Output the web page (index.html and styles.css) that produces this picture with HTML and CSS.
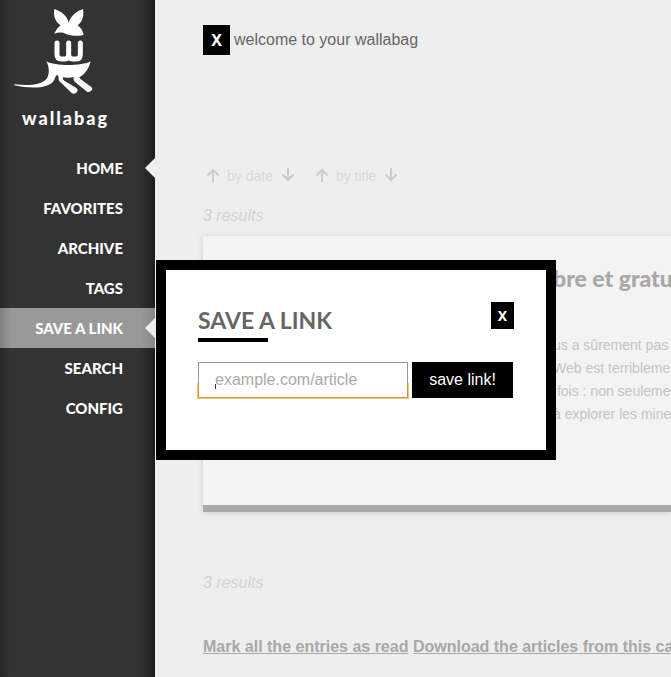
FILE: index.html
```html
<!DOCTYPE html>
<html lang="en">
<head>
<meta charset="utf-8">
<title>wallabag</title>
<link rel="stylesheet" href="styles.css">
</head>
<body>
<div class="layout">
  <header class="sidebar">
    <a class="brand" href="#">
      <svg class="brand-mark" viewBox="39 24 240 261" aria-hidden="true">
        <path fill="#fff" d="M163 27C184 34 202 48 206 68C212 48 230 33 249 27C253 50 246 66 233 76C243 83 248 92 251 104C235 110 212 108 198 102C186 96 174 97 163 101C167 91 174 82 182 76C167 66 159 50 163 27Z"/>
        <path fill="none" stroke="#fff" stroke-width="15" stroke-linecap="round" d="M171 129V163Q171 177 184 177H194Q206 177 206 163V129M206 163Q206 177 218 177H229Q241 177 241 163V129"/>
        <path fill="#fff" d="M139 184C165 199 245 199 272 184C266 208 254 224 238 232L241 237L273 260Q280 265 275 271Q268 279 261 275L228 248Q217 241 222 231C214 233 200 234 189 232Q187 238 194 243L228 263Q236 269 231 276Q223 285 214 278L181 246Q174 242 176 232Q172 218 166 231C160 262 110 270 43 256L43 253C90 258 125 254 140 236C150 222 147 198 139 184Z"/>
      </svg>
      <span class="brand-name">wallabag</span>
    </a>
    <nav>
      <ul class="menu">
        <li><a class="pointer" href="#">Home</a></li>
        <li><a href="#">Favorites</a></li>
        <li><a href="#">Archive</a></li>
        <li><a href="#">Tags</a></li>
        <li><a class="pointer active" href="#">Save a link</a></li>
        <li><a href="#">Search</a></li>
        <li><a href="#">Config</a></li>
      </ul>
    </nav>
  </header>
  <main class="content">
    <div class="message"><button class="close" type="button">X</button><p>welcome to your wallabag</p></div>
    <div class="sort">
      <a href="#" aria-label="date ascending"><svg viewBox="0 0 14 16"><path d="M7 14V2M1.500 7.500L7 2L12.500 7.500"/></svg></a>
      <span>by date</span>
      <a href="#" aria-label="date descending"><svg viewBox="0 0 14 16"><path d="M7 0V12M1.500 6.500L7 12L12.500 6.500"/></svg></a>
      <a class="next" href="#" aria-label="title ascending"><svg viewBox="0 0 14 16"><path d="M7 14V2M1.500 7.500L7 2L12.500 7.500"/></svg></a>
      <span>by title</span>
      <a href="#" aria-label="title descending"><svg viewBox="0 0 14 16"><path d="M7 0V12M1.500 6.500L7 12L12.500 6.500"/></svg></a>
    </div>
    <p class="results">3 results</p>
    <article class="entry">
      <h2>bre et gratuit</h2>
      <p>us a sûrement pas<br>Web est terriblement<br>&nbsp;fois : non seulement<br>à explorer les mines</p>
    </article>
    <p class="results">3 results</p>
    <p class="actions"><a href="#">Mark all the entries as read</a> <a href="#">Download the articles from this category</a></p>
  </main>
</div>
<section class="dialog" role="dialog" aria-labelledby="dialog-title">
  <div class="dialog-head">
    <h2 id="dialog-title">Save a link</h2>
    <button class="close small" type="button">X</button>
  </div>
  <form class="save-form">
    <div class="field"><input type="text" aria-label="Link" placeholder="example.com/article"></div>
    <button class="submit" type="button">save link!</button>
  </form>
</section>
</body>
</html>
```

FILE: styles.css
```css
* { box-sizing: border-box; }
body {
  margin: 0;
  position: relative;
  overflow: hidden;
  background: #eee;
  color: #666;
  font: 16px/24px "Liberation Sans", Arial, sans-serif;
}
h2, p, ul { margin: 0; padding: 0; }
button, input { font: inherit; border: 0; border-radius: 0; margin: 0; }
.layout {
  display: grid;
  grid-template-columns: 155px minmax(0, 1fr);
  min-height: 100vh;
}
.sidebar {
  background: linear-gradient(to right, #262626, #333 10px, #333 calc(100% - 18px), #2a2a2a calc(100% - 9px), #1c1c1c);
}
.brand { display: block; height: 148px; padding: 8px 13px 0; color: #fff; text-decoration: none; }
.brand-mark { display: block; width: 80px; height: 87px; }
.brand-name {
  display: block;
  margin-top: 11px;
  padding-left: 9px;
  font: 900 18px/24px Lato, sans-serif;
  letter-spacing: 2px;
}
.menu { list-style: none; }
.menu a {
  display: block;
  position: relative;
  height: 40px;
  padding-right: 32px;
  color: #fff;
  font: 900 15px/40px Lato, sans-serif;
  text-align: right;
  text-decoration: none;
  text-transform: uppercase;
}
.menu .active { background: linear-gradient(to right, #808080, #999 12px, #999 calc(100% - 14px), #888); }
.pointer::after {
  content: "";
  position: absolute;
  right: 0;
  top: 10px;
  border: 10px solid transparent;
  border-right-color: #eee;
  border-left: 0;
}
.content { padding: 25px 0 16px 48px; white-space: nowrap; }
.message { display: flex; align-items: center; gap: 4px; height: 30px; }
.close {
  width: 27px;
  height: 30px;
  padding: 0;
  background: #000;
  color: #fff;
  font: bold 16px/30px "Noto Sans", sans-serif;
}
.sort {
  display: flex;
  align-items: center;
  margin-top: 109px;
  padding-left: 3px;
  height: 24px;
  color: #d8d8d8;
  font-size: 14px;
}
.sort svg { display: block; width: 14px; height: 16px; fill: none; stroke: #ccc; stroke-width: 2; }
.sort span { margin: 0 8px 0 7px; }
.sort .next { margin-left: 20px; }
.results { margin-top: 16px; color: #d2d2d2; font-style: italic; }
.entry {
  height: 276px;
  margin-top: 8px;
  padding: 26px 0 0 350px;
  overflow: clip;
  overflow-clip-margin: 10px;
  background: #f3f3f3;
  border-bottom: 7px solid #a8a8a8;
  box-shadow: 0 1px 6px #ccc;
  color: #c4c4c4;
  font-size: 14px;
  line-height: 23px;
}
.entry h2 { margin-bottom: 40px; color: #a8a8a8; font: 900 23px/32px Lato, sans-serif; }
.entry + .results { margin-top: 59px; }
.actions { margin-top: 40px; font-weight: bold; }
.actions a { color: #a8a8a8; }
.dialog {
  position: absolute;
  left: 156px;
  top: 260px;
  width: 400px;
  height: 200px;
  padding: 32px;
  border: 10px solid #000;
  background: #fff;
}
.dialog-head { display: flex; justify-content: space-between; height: 40px; }
.dialog h2 {
  position: relative;
  font: bold 23px/36px Lato, sans-serif;
  text-transform: uppercase;
}
.dialog h2::after {
  content: "";
  position: absolute;
  left: 0;
  bottom: 0;
  width: 70px;
  height: 4px;
  background: #000;
}
.small { width: 23px; height: 27px; font-size: 14px; line-height: 27px; }
.save-form { display: flex; gap: 4px; margin-top: 20px; }
.field { position: relative; width: 210px; }
.field input {
  display: block;
  width: 100%;
  height: 36px;
  padding: 0 16px;
  border: 1px solid #999;
  background: #fff;
  color: #666;
}
.field input::placeholder { color: #aaa; opacity: 1; }
.field::before {
  content: "";
  position: absolute;
  left: 0;
  right: 0;
  bottom: 0;
  height: 14px;
  border: 1px solid #c9953f;
  border-top: 0;
  box-shadow: 0 0 0 1px #f0c878;
  clip-path: inset(0 -1px -1px);
  pointer-events: none;
}
.field::after {
  content: "";
  position: absolute;
  left: 17px;
  top: 22px;
  width: 1px;
  height: 5px;
  background: #333;
}
.submit { width: 101px; height: 36px; padding: 0; background: #000; color: #fff; }
```
